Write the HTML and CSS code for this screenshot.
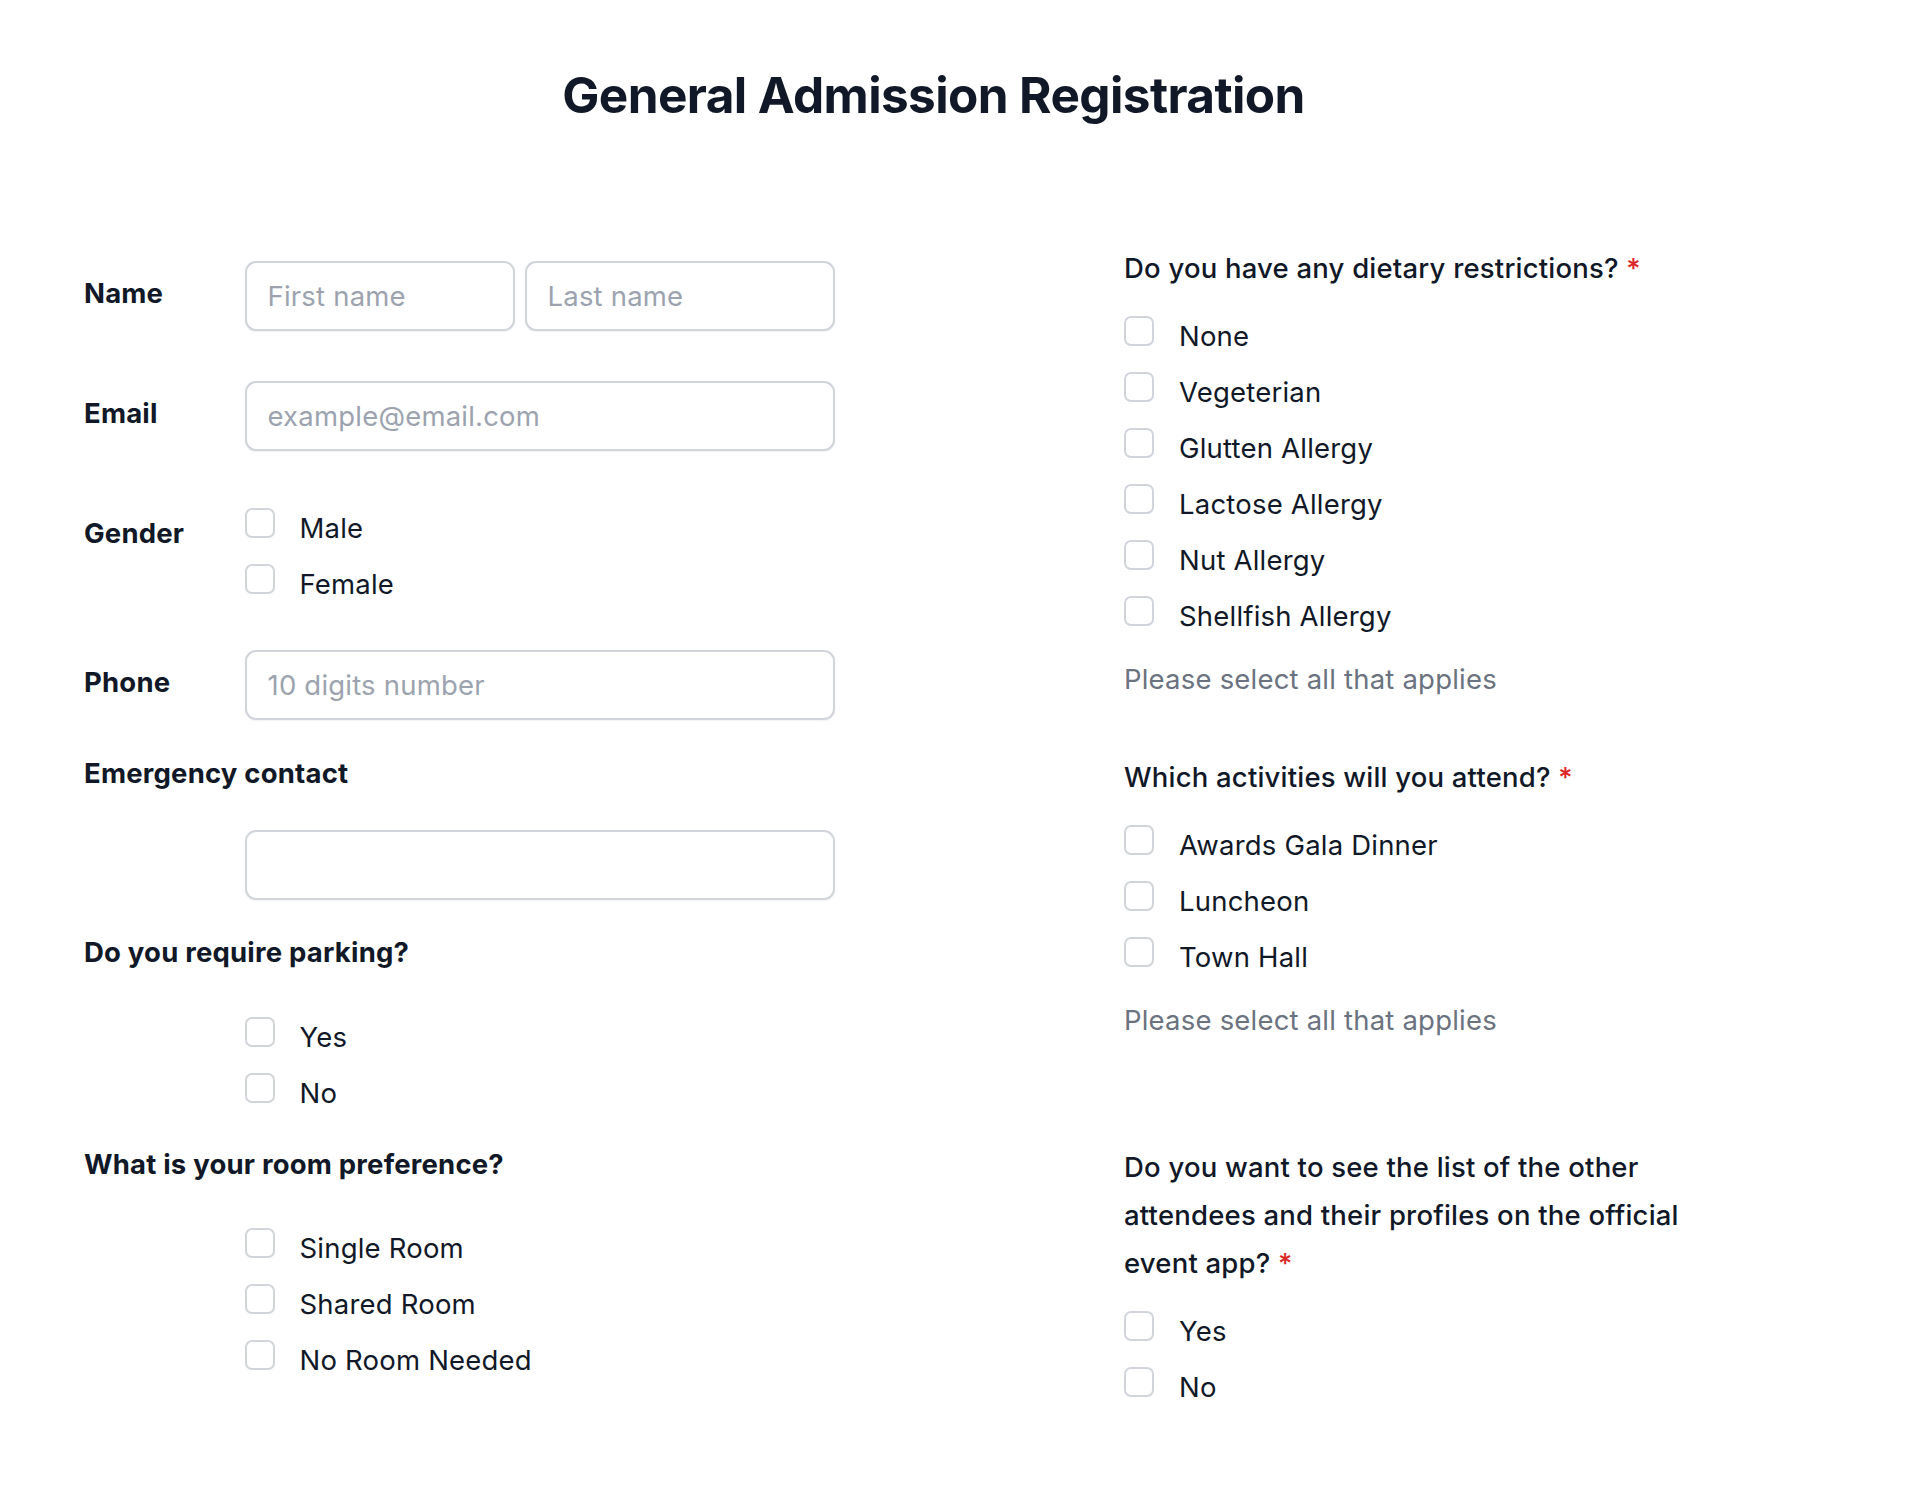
FILE: index.html
```html
<!DOCTYPE html>
<html lang="en">
  <head>
    <meta charset="UTF-8" />
    <meta name="viewport" content="width=device-width, initial-scale=1.0" />
    <title>General Admission Registration</title>
    <link rel="stylesheet" href="styles.css">
  </head>
  <body>
    <div class="page">
      <h1 class="title">General Admission Registration</h1>
      <form class="form">
        <div class="col-left">
          <div class="row row-name">
            <label class="label">Name</label>
            <div class="field split">
              <input class="input input-first" type="text" placeholder="First name" />
              <input class="input input-last" type="text" placeholder="Last name" />
            </div>
          </div>
          <div class="row row-email">
            <label class="label">Email</label>
            <div class="field">
              <input class="input" type="email" placeholder="example@email.com" />
            </div>
          </div>
          <div class="row row-gender">
            <label class="label label-group">Gender</label>
            <div class="options">
              <label class="option"><input class="check" type="checkbox" /><span>Male</span></label>
              <label class="option"><input class="check" type="checkbox" /><span>Female</span></label>
            </div>
          </div>
          <div class="row row-phone">
            <label class="label">Phone</label>
            <div class="field">
              <input class="input" type="tel" placeholder="10 digits number" />
            </div>
          </div>
          <p class="heading heading-emergency">Emergency contact</p>
          <div class="indent indent-emergency">
            <input class="input" type="text" />
          </div>
          <p class="heading heading-parking">Do you require parking?</p>
          <div class="indent options options-parking">
            <label class="option"><input class="check" type="checkbox" /><span>Yes</span></label>
            <label class="option"><input class="check" type="checkbox" /><span>No</span></label>
          </div>
          <p class="heading heading-room">What is your room preference?</p>
          <div class="indent options options-room">
            <label class="option"><input class="check" type="checkbox" /><span>Single Room</span></label>
            <label class="option"><input class="check" type="checkbox" /><span>Shared Room</span></label>
            <label class="option"><input class="check" type="checkbox" /><span>No Room Needed</span></label>
          </div>
        </div>

        <div class="col-right">
          <p class="question">Do you have any dietary restrictions? <span class="req">*</span></p>
          <div class="options options-q">
            <label class="option"><input class="check" type="checkbox" /><span>None</span></label>
            <label class="option"><input class="check" type="checkbox" /><span>Vegeterian</span></label>
            <label class="option"><input class="check" type="checkbox" /><span>Glutten Allergy</span></label>
            <label class="option"><input class="check" type="checkbox" /><span>Lactose Allergy</span></label>
            <label class="option"><input class="check" type="checkbox" /><span>Nut Allergy</span></label>
            <label class="option"><input class="check" type="checkbox" /><span>Shellfish Allergy</span></label>
          </div>
          <p class="help">Please select all that applies</p>

          <p class="question question-activities">Which activities will you attend? <span class="req">*</span></p>
          <div class="options options-q">
            <label class="option"><input class="check" type="checkbox" /><span>Awards Gala Dinner</span></label>
            <label class="option"><input class="check" type="checkbox" /><span>Luncheon</span></label>
            <label class="option"><input class="check" type="checkbox" /><span>Town Hall</span></label>
          </div>
          <p class="help">Please select all that applies</p>

          <p class="question question-app">Do you want to see the list of the other attendees and their profiles on the official event app? <span class="req">*</span></p>
          <div class="options options-q">
            <label class="option"><input class="check" type="checkbox" /><span>Yes</span></label>
            <label class="option"><input class="check" type="checkbox" /><span>No</span></label>
          </div>
        </div>
      </form>
    </div>
  </body>
</html>
```

FILE: styles.css
```css
body {
  margin: 0;
  background: #ffffff;
  color: #111827;
  font-family: Inter, "Noto Sans", sans-serif;
  font-size: 27.5px;
  line-height: 48px;
  letter-spacing: 0.2px;
}
.page {
  padding: 65px 137px 0 84px;
}
.title {
  margin: 0;
  text-align: center;
  font-size: 49.5px;
  line-height: 60px;
  font-weight: 700;
  letter-spacing: -0.6px;
  color: #111827;
}
.form {
  display: grid;
  grid-template-columns: 751px 596px;
  column-gap: 289px;
  margin-top: 119px;
}
.col-left {
  padding-top: 17px;
}
.row {
  display: flex;
  align-items: flex-start;
}
.label {
  width: 160.5px;
  flex-shrink: 0;
  padding-top: 8px;
  font-weight: 700;
}
.label-group {
  padding-top: 5px;
}
.field {
  flex: 1;
  display: flex;
}
.split {
  gap: 10px;
}
.input {
  width: 100%;
  height: 70px;
  box-sizing: border-box;
  border: 2px solid #d1d5db;
  border-radius: 11px;
  padding: 0 21px;
  font-family: inherit;
  font-size: 27.5px;
  letter-spacing: 0.2px;
  color: #111827;
  background: #ffffff;
  box-shadow: 0 1px 2px rgba(0, 0, 0, 0.06);
  outline: none;
}
.input::placeholder {
  color: #9ca3af;
}
.input-first {
  width: 270px;
  flex-shrink: 0;
}
.input-last {
  flex: 1;
}
.row-email {
  margin-top: 50px;
}
.row-gender {
  margin-top: 53px;
}
.row-phone {
  margin-top: 42px;
}
.heading {
  margin: 0;
  font-weight: 700;
}
.heading-emergency {
  margin-top: 29px;
}
.indent {
  padding-left: 160.5px;
}
.indent-emergency {
  margin-top: 33px;
}
.heading-parking {
  margin-top: 28px;
}
.options-parking {
  margin-top: 37px;
}
.heading-room {
  margin-top: 23px;
}
.options-room {
  margin-top: 36px;
}
.options {
  display: flex;
  flex-direction: column;
  gap: 8px;
}
.option {
  display: flex;
  align-items: flex-start;
  cursor: pointer;
}
.check {
  appearance: none;
  -webkit-appearance: none;
  width: 30px;
  height: 30px;
  margin: 4px 25px 0 0;
  flex-shrink: 0;
  box-sizing: border-box;
  border: 2px solid #d1d5db;
  border-radius: 7px;
  background: #ffffff;
}
.question {
  margin: 0;
  font-weight: 500;
}
.req {
  color: #dc2626;
}
.options-q {
  margin-top: 20px;
}
.help {
  margin: 15px 0 0;
  color: #6b7280;
}
.question-activities {
  margin-top: 50px;
}
.question-app {
  margin-top: 99px;
}
```
